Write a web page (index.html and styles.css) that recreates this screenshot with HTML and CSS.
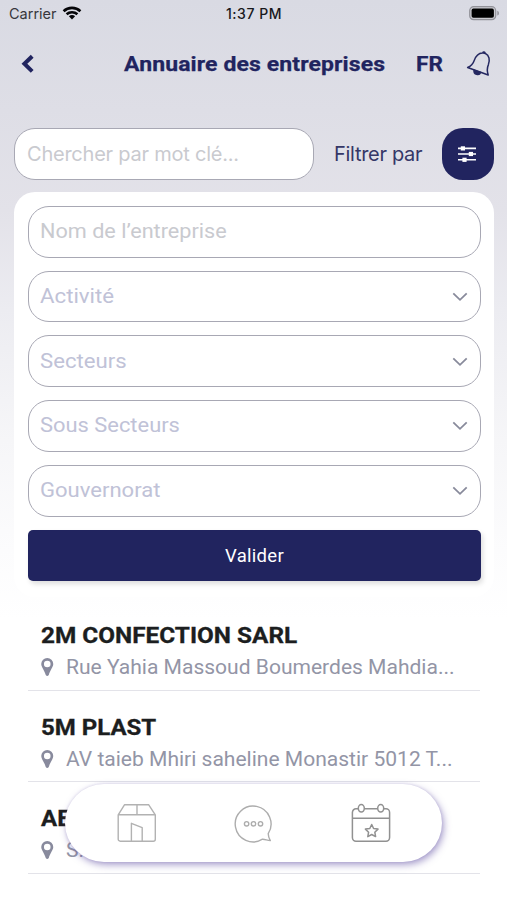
FILE: index.html
```html
<!DOCTYPE html>
<html lang="fr">
<head>
<meta charset="utf-8">
<title>Annuaire des entreprises</title>
<link rel="stylesheet" href="styles.css">
</head>
<body>
<div class="screen">
  <div class="status">
    <div class="carrier"><span class="carrier-name">Carrier</span>
      <svg width="20" height="14" viewBox="0 0 20 14" fill="none" stroke="#050508" stroke-width="2.6"><path d="M1.6 5.2C6.2.7 13.8.7 18.4 5.2M4.6 8.3c3-2.8 7.8-2.8 10.8 0"/><path d="M10 13.4 6.9 10.2c1.7-1.5 4.5-1.5 6.2 0z" fill="#050508" stroke="none"/></svg>
    </div>
    <span class="time">1:37 PM</span>
    <svg class="battery" width="31" height="15" viewBox="0 0 31 15"><rect x=".7" y=".7" width="26" height="13" rx="4" fill="#c9c9cf" stroke="#929299" stroke-width="1.2"/><rect x="2.6" y="2.6" width="22.3" height="9.2" rx="1.8"/><path d="M28.3 4.8c2.2.6 2.2 4.2 0 4.8z" fill="#929299"/></svg>
  </div>
  <header class="header">
    <svg class="back" width="14" height="20" viewBox="0 0 14 20" fill="none" stroke="#21245f" stroke-width="4"><path d="M12.2 2.2 4.4 9.8l7.800 7.600"/></svg>
    <h1 class="title">Annuaire des entreprises</h1>
    <span class="lang">FR</span>
    <svg class="bell" width="26" height="28" viewBox="0 0 26 28" fill="none" stroke="#252861" stroke-width="1.500" stroke-linejoin="round"><path d="M16.4 3.1c-4.3.2-6.8 3.5-8.3 7.6-1.1 3.3-2.5 5-6.500 6.800L22.200 25c-1.400-4.200-1.400-6.600.2-10.400 1.700-4.400.9-9.500-3-11.100-1-.4-2-.5-3-.4zM16.800 2.800c.4-1.300 2.400-.9 2.300.6"/><path d="M8 20.200c-.4 4.300 5.200 6 6.600 2.300z" fill="#252861"/></svg>
  </header>
  <div class="search-row">
    <div class="search"><span>Chercher par mot clé...</span></div>
    <span class="filter-label">Filtrer par</span>
    <div class="filter-button">
      <svg width="20" height="18" viewBox="0 0 20 18" stroke="#fff" stroke-width="1.6" fill="#fff"><path d="M1 3.400h18M1 9h18M1 14.800h18"/><rect x="4.600" y="2.100" width="2.600" height="2.600"/><rect x="12.600" y="7.700" width="2.600" height="2.600"/><rect x="6.200" y="13.500" width="2.600" height="2.600"/></svg>
    </div>
  </div>
  <section class="panel">
    <div class="field name"><span class="t-name">Nom de l’entreprise</span></div>
    <div class="field"><span class="t-activity">Activité</span><svg class="chevron" viewBox="0 0 16 10"><path d="m1.300 1.300 6.700 6.500 6.700-6.500"/></svg></div>
    <div class="field"><span class="t-sectors">Secteurs</span><svg class="chevron" viewBox="0 0 16 10"><path d="m1.300 1.300 6.700 6.500 6.700-6.500"/></svg></div>
    <div class="field"><span class="t-sub">Sous Secteurs</span><svg class="chevron" viewBox="0 0 16 10"><path d="m1.300 1.300 6.700 6.500 6.700-6.500"/></svg></div>
    <div class="field"><span class="t-gov">Gouvernorat</span><svg class="chevron" viewBox="0 0 16 10"><path d="m1.300 1.300 6.700 6.500 6.700-6.500"/></svg></div>
    <div class="submit">Valider</div>
  </section>
  <main class="list">
    <article class="item">
      <h2 class="n1">2M CONFECTION SARL</h2>
      <p><svg class="pin" viewBox="0 0 12 18"><path fill-rule="evenodd" d="M6 0a6 6 0 0 0-6 6c0 3 3.200 6.300 4.500 11Q6 19 7.500 17C8.800 12.300 12 9 12 6a6 6 0 0 0-6-6zm0 2.700a3.300 3.300 0 1 1 0 6.600 3.300 3.300 0 0 1 0-6.600z"/></svg><span class="address">Rue Yahia Massoud Boumerdes Mahdia...</span></p>
    </article>
    <article class="item">
      <h2 class="n2">5M PLAST</h2>
      <p><svg class="pin" viewBox="0 0 12 18"><path fill-rule="evenodd" d="M6 0a6 6 0 0 0-6 6c0 3 3.200 6.300 4.500 11Q6 19 7.500 17C8.800 12.300 12 9 12 6a6 6 0 0 0-6-6zm0 2.700a3.300 3.300 0 1 1 0 6.600 3.300 3.300 0 0 1 0-6.600z"/></svg><span class="address">AV taieb Mhiri saheline Monastir 5012 T...</span></p>
    </article>
    <article class="item">
      <h2 class="n3">AE</h2>
      <p><svg class="pin" viewBox="0 0 12 18"><path fill-rule="evenodd" d="M6 0a6 6 0 0 0-6 6c0 3 3.200 6.300 4.500 11Q6 19 7.500 17C8.800 12.300 12 9 12 6a6 6 0 0 0-6-6zm0 2.700a3.300 3.300 0 1 1 0 6.600 3.300 3.300 0 0 1 0-6.600z"/></svg><span class="address">S.</span></p>
    </article>
  </main>
  <nav class="tabbar">
    <svg width="40" height="40" viewBox="0 0 40 40" fill="none" stroke="#b2b2b2" stroke-width="1.400" stroke-linejoin="round"><path d="M1.200 11.800 7.600 1.700h24L38.300 11.800V36.200a2 2 0 0 1-2 2H3.200a2 2 0 0 1-2-2zM1.200 11.800h37.100M20 1.700v10.100M14.400 38V20.300L25.200 24.700V38"/></svg>
    <svg width="40" height="40" viewBox="0 0 40 40" fill="none" stroke="#adadad" stroke-width="1.400" stroke-linejoin="round"><path d="M28.500 36.200A17.900 17.900 0 1 1 34.200 30.600C34.200 33.500 35.200 35.700 36.300 37.600 33.400 37.500 30.800 36 28.500 36.200z"/><circle cx="12.600" cy="20.800" r="2.200"/><circle cx="19.500" cy="20.800" r="2.200"/><circle cx="26.500" cy="20.800" r="2.200"/></svg>
    <svg width="40" height="40" viewBox="0 0 40 40" fill="none" stroke="#919191" stroke-width="1.500" stroke-linejoin="round"><path d="M7.200 5.800H5a3.600 3.600 0 0 0-3.600 3.600V34.600a3.600 3.600 0 0 0 3.600 3.600H35a3.600 3.600 0 0 0 3.600-3.600V9.400A3.600 3.600 0 0 0 35 5.800H32.800M13.400 5.800H26.600M1.400 15.300H38.600"/><ellipse cx="10.300" cy="5.300" rx="3" ry="3.700"/><ellipse cx="29.700" cy="5.300" rx="3" ry="3.700"/><path d="m20.700 21.500 1.900 4 4.400.6-3.200 3.100.8 4.400-3.900-2.100-3.900 2.100.8-4.400-3.200-3.100 4.400-.6z"/></svg>
  </nav>
</div>
</body>
</html>
```
FILE: styles.css
```css
* { box-sizing: border-box; }
body { margin: 0; font-family: Roboto, "Liberation Sans", sans-serif; }
h1, h2, p { margin: 0; }
svg { display: block; flex: none; }
span { white-space: pre; }
.screen {
  position: relative; width: 507px; height: 900px; overflow: hidden;
  background: linear-gradient(#d9dae3 0, #dedee6 110px, #e3e2e9 210px, #ececf1 310px, #f6f6f8 440px, #fcfcfd 550px, #fff 620px);
}
.status {
  height: 28px; padding: 0 7px 0 9px; display: grid; grid-template-columns: 1fr auto 1fr; align-items: center;
  font: 500 14px Inter, sans-serif; color: #18181c;
}
.time { margin: -1px 0 0 -1px; letter-spacing: .55px; }
.carrier { display: flex; align-items: center; gap: 6px; font-weight: 400; color: #37373c; }
.carrier-name { font-size: 14.500px; margin-top: -1px; }
.carrier svg { margin: -3px 0 0 -1px; }
.battery { justify-self: end; margin-top: -2px; }
.header { height: 72px; display: flex; align-items: center; padding: 0 15px 0 20px; color: #21245f; }
.header > * { margin-top: -1px; }
.title, .lang, .field span, .item h2, .address { transform-origin: left center; }
.title { width: 260px; margin-left: 90px; font-size: 20.500px; font-weight: 700; letter-spacing: .1px; white-space: nowrap; transform: scaleX(1.121); -webkit-text-stroke: .25px #21245f; }
.lang { width: 27px; margin-left: 33px; font-size: 20.500px; font-weight: 700; letter-spacing: .2px; transform: scaleX(1.1); -webkit-text-stroke: .25px #21245f; }
.header .bell { margin-left: 23px; margin-top: 0; }
.search-row { height: 52px; margin: 28px 13px 0 14px; display: flex; align-items: center; }
.search {
  width: 300px; height: 52px; border: 1.300px solid #a8a8b4; border-radius: 21px; background: #fff;
  display: flex; align-items: center; padding-left: 12px;
  font: 400 20px Inter, sans-serif; color: #c9cacf; letter-spacing: -.23px;
}
.filter-label { width: 88px; margin-left: 20px; font: 400 20px Inter, sans-serif; color: #353767; letter-spacing: -.3px; }
.filter-button {
  width: 52px; height: 52px; margin-left: 20px; border-radius: 21px; background: #21245f;
  display: flex; align-items: center; justify-content: center;
}
.filter-button svg { margin-left: -2px; }
.panel {
  margin: 12px 13px 0 14px; height: 405px; padding: 14px 13px 14px 14px; border-radius: 21px; background: #fff;
  display: flex; flex-direction: column; gap: 12.900px;
}
.field {
  height: 51.800px; flex: none; border: 1.300px solid #a8a8b4; border-radius: 21px;
  display: flex; align-items: center; justify-content: space-between; padding: 0 12px 1.500px 11px;
  font-size: 20.500px; color: #c0c2d7;
}
.name { color: #c9cacf; }
.t-name { transform: scaleX(1.056); }
.t-activity { transform: scaleX(1.085); }
.t-sectors { transform: scaleX(1.08); }
.t-sub { transform: scaleX(1.068); }
.t-gov { transform: scaleX(1.075); }
.chevron { width: 16px; height: 10px; margin-top: 2px; fill: none; stroke: #888a9b; stroke-width: 1.800; }
.submit {
  height: 51.500px; margin-top: .5px; flex: none; border-radius: 5px; background: #21245f; color: #fff;
  display: flex; align-items: center; justify-content: center; font-size: 18.500px; letter-spacing: .3px;
  box-shadow: 2px 3px 5px #0002;
}
.list { margin: 2px 27px 0 28px; }
.item { height: 91.500px; padding: 23px 0 0 13px; border-bottom: 1.300px solid #e3e3e9; }
.item h2 { width: max-content; font-size: 22.500px; line-height: 26px; font-weight: 700; color: #1c1e20; white-space: nowrap; -webkit-text-stroke: .3px #1c1e20; }
.n1 { transform: scaleX(1.082); }
.n2, .n3 { transform: scaleX(1.067); }
.item p { margin-top: 6px; height: 26px; display: flex; align-items: center; gap: 12.500px; font-size: 20.500px; color: #9395a6; }
.address { transform: scaleX(1.026); }
.pin { width: 12.500px; height: 18px; fill: #888a9d; }
.tabbar {
  position: absolute; left: 65px; top: 784px; width: 377px; height: 78px; padding: 0 51px 0 52px;
  display: flex; align-items: center; justify-content: space-between;
  border-radius: 39px; background: #fff; box-shadow: 2px 3px 7px #5a48a080, 0 0 3px #5a48a030;
}
```
